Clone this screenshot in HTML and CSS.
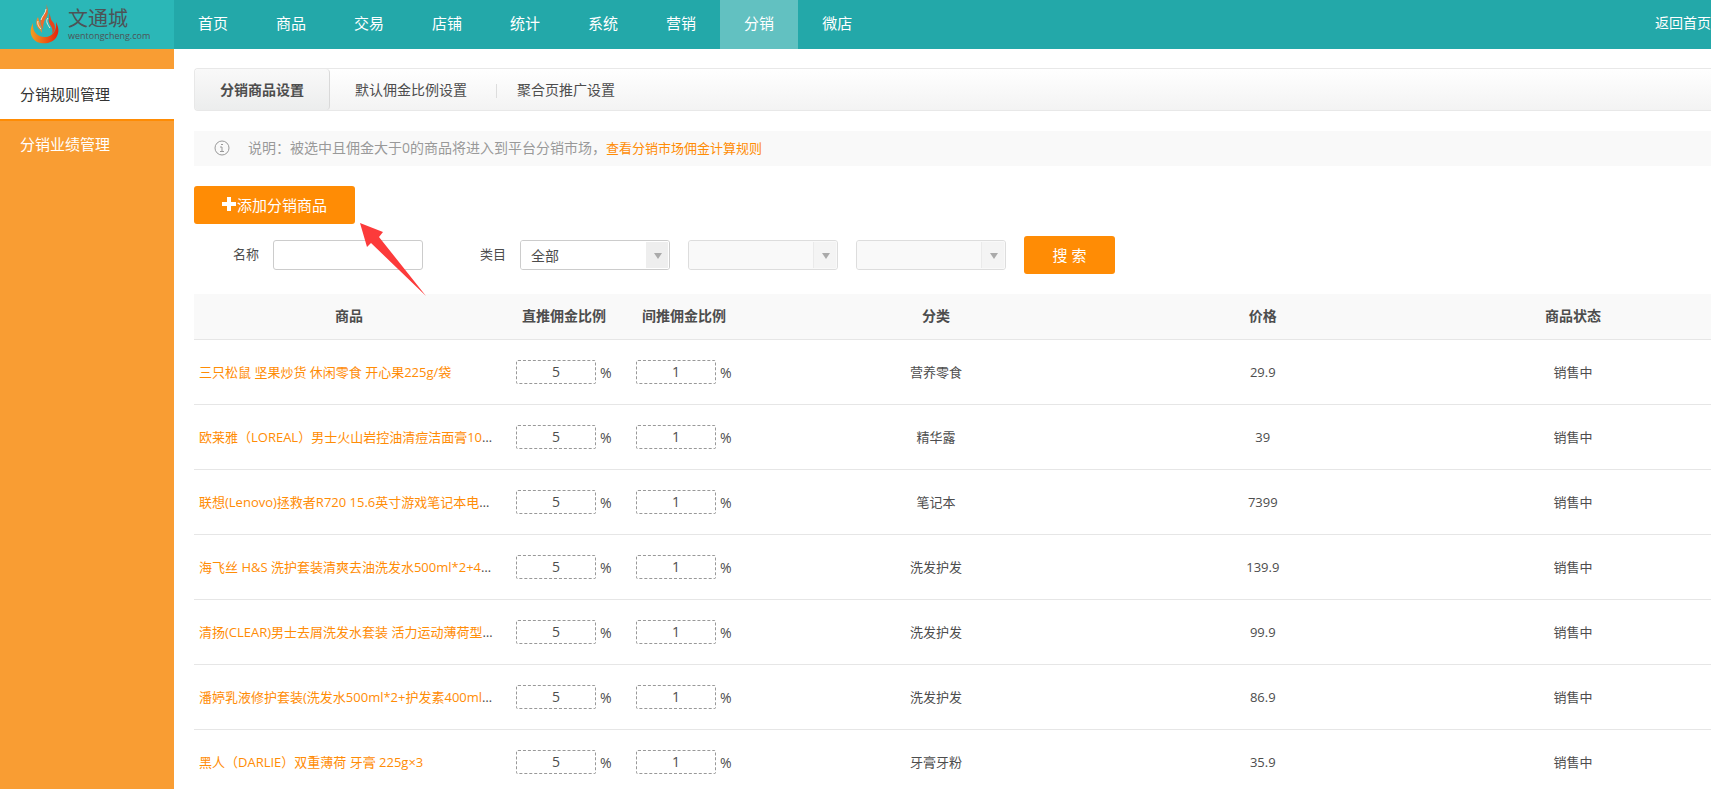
FILE: index.html
```html
<!DOCTYPE html>
<html lang="zh-CN">
<head>
  <meta charset="UTF-8">
  <meta name="viewport" content="width=device-width, initial-scale=1.0">
  <title>分销规则管理</title>
  <link rel="stylesheet" href="styles.css">
</head>
<body>
  <header class="header">
    <a href="#" class="logo">
      <svg class="logo-flame" width="32" height="42" viewBox="0 0 32 42">
        <defs>
          <linearGradient id="flame" x1="0" y1="0" x2="1" y2="0">
            <stop offset="0" stop-color="#f0a020"/>
            <stop offset="1" stop-color="#e8200c"/>
          </linearGradient>
        </defs>
        <path d="M4 19C0 26 1 34 8 38C15 41 25 39 28 32C30 28 30 24 27 18C28 26 24 33 16 33C8 33 3 27 4 19Z" fill="url(#flame)"/>
        <path d="M17 0C19 6 16 9 13 13C11 16 11 19 12 21L14 26C14 20 15 17 17 14C19 11 20 6 17 0Z" fill="#ec6a2c"/>
        <path d="M19 8C22 12 19 15 20 18C21 22 25 24 23 30C28 25 26 20 23 17C21 14 22 11 19 8Z" fill="#e8451c"/>
        <path d="M9 13C6 18 7 22 11 26L13 29C13 24 11 20 9 13Z" fill="#ee8a30"/>
        <path d="M17 5C17 9 13 12 12 16M19 14C16 17 19 21 21 24M9 17C8 20 10 23 12 25" fill="none" stroke="#f8e6d4"/>
      </svg>
      <span class="logo-text">
        <b>文通城</b>
        <small>wentongcheng.com</small>
      </span>
    </a>
    <nav class="nav">
      <a href="#">首页</a>
      <a href="#">商品</a>
      <a href="#">交易</a>
      <a href="#">店铺</a>
      <a href="#">统计</a>
      <a href="#">系统</a>
      <a href="#">营销</a>
      <a href="#" class="active">分销</a>
      <a href="#">微店</a>
    </nav>
    <a href="#" class="back">返回首页</a>
  </header>

  <div class="wrap">
    <aside class="sidebar">
      <a href="#" class="active">分销规则管理</a>
      <a href="#">分销业绩管理</a>
    </aside>

    <main class="main">
      <div class="tabs">
        <a href="#" class="active">分销商品设置</a>
        <a href="#">默认佣金比例设置</a>
        <a href="#">聚合页推广设置</a>
      </div>

      <div class="tips">
        <svg width="16" height="16" viewBox="0 0 16 16" fill="none" stroke="#999">
          <circle cx="8" cy="8" r="7"/>
          <path d="M6 7H8V11M6 11.500H10M7 4.500H9"/>
        </svg>
        <p>说明：被选中且佣金大于0的商品将进入到平台分销市场，<a href="#">查看分销市场佣金计算规则</a></p>
      </div>

      <div class="toolbar">
        <button type="button" class="btn btn-add">
          <svg width="14" height="14" viewBox="0 0 14 14"><path d="M5 0H9V5H14V9H9V14H5V9H0V5H5Z" fill="#fff"/></svg>添加分销商品
        </button>
        <svg class="pointer" width="66" height="74" viewBox="0 0 66 74"><path d="M0 0L23 9L19 14L66 73L11 20L7 24Z" fill="#fc3b3b"/></svg>
      </div>

      <form class="search" id="form">
        <label for="name">名称</label>
        <input type="text" id="name" class="name">
        <label for="cate1" class="cate-label">类目</label>
        <span class="select">
          <select id="cate1"><option>全部</option></select>
        </span>
        <span class="select disabled">
          <select id="cate2" aria-label="二级类目" disabled><option></option></select>
        </span>
        <span class="select disabled">
          <select id="cate3" aria-label="三级类目" disabled><option></option></select>
        </span>
        <button type="submit" class="btn btn-search">搜 索</button>
      </form>

      <table class="list">
        <thead>
          <tr>
            <th class="c-goods">商品</th>
            <th class="c-rate">直推佣金比例</th>
            <th class="c-rate">间推佣金比例</th>
            <th class="c-cate">分类</th>
            <th class="c-price">价格</th>
            <th class="c-status">商品状态</th>
          </tr>
        </thead>
        <tbody>
          <tr>
            <td><div class="goods"><a href="#">三只松鼠 坚果炒货 休闲零食 开心果225g/袋</a></div></td>
            <td class="rate"><input type="text" value="5" aria-label="直推佣金比例">%</td>
            <td class="rate"><input type="text" value="1" aria-label="间推佣金比例">%</td>
            <td>营养零食</td>
            <td>29.9</td>
            <td class="status">销售中</td>
          </tr>
          <tr>
            <td><div class="goods"><a href="#">欧莱雅（LOREAL）男士火山岩控油清痘洁面膏100ml</a></div></td>
            <td class="rate"><input type="text" value="5" aria-label="直推佣金比例">%</td>
            <td class="rate"><input type="text" value="1" aria-label="间推佣金比例">%</td>
            <td>精华露</td>
            <td>39</td>
            <td class="status">销售中</td>
          </tr>
          <tr>
            <td><div class="goods"><a href="#">联想(Lenovo)拯救者R720 15.6英寸游戏笔记本电脑 黑色</a></div></td>
            <td class="rate"><input type="text" value="5" aria-label="直推佣金比例">%</td>
            <td class="rate"><input type="text" value="1" aria-label="间推佣金比例">%</td>
            <td>笔记本</td>
            <td>7399</td>
            <td class="status">销售中</td>
          </tr>
          <tr>
            <td><div class="goods"><a href="#">海飞丝 H&amp;S 洗护套装清爽去油洗发水500ml*2+400ml</a></div></td>
            <td class="rate"><input type="text" value="5" aria-label="直推佣金比例">%</td>
            <td class="rate"><input type="text" value="1" aria-label="间推佣金比例">%</td>
            <td>洗发护发</td>
            <td>139.9</td>
            <td class="status">销售中</td>
          </tr>
          <tr>
            <td><div class="goods"><a href="#">清扬(CLEAR)男士去屑洗发水套装 活力运动薄荷型500ml</a></div></td>
            <td class="rate"><input type="text" value="5" aria-label="直推佣金比例">%</td>
            <td class="rate"><input type="text" value="1" aria-label="间推佣金比例">%</td>
            <td>洗发护发</td>
            <td>99.9</td>
            <td class="status">销售中</td>
          </tr>
          <tr>
            <td><div class="goods"><a href="#">潘婷乳液修护套装(洗发水500ml*2+护发素400ml组合)</a></div></td>
            <td class="rate"><input type="text" value="5" aria-label="直推佣金比例">%</td>
            <td class="rate"><input type="text" value="1" aria-label="间推佣金比例">%</td>
            <td>洗发护发</td>
            <td>86.9</td>
            <td class="status">销售中</td>
          </tr>
          <tr>
            <td><div class="goods"><a href="#">黑人（DARLIE）双重薄荷 牙膏 225g×3</a></div></td>
            <td class="rate"><input type="text" value="5" aria-label="直推佣金比例">%</td>
            <td class="rate"><input type="text" value="1" aria-label="间推佣金比例">%</td>
            <td>牙膏牙粉</td>
            <td>35.9</td>
            <td class="status">销售中</td>
          </tr>
        </tbody>
      </table>
    </main>
  </div>
</body>
</html>
```
FILE: styles.css
```css
*{
  box-sizing: border-box;
}
body{
  margin: 0;
  display: flex;
  flex-direction: column;
  min-height: 100vh;
  font-family: "Open Sans", "Noto Sans CJK SC", sans-serif;
  font-size: 13px;
  line-height: 20px;
  color: #4d4d4d;
  background-color: #fff;
}
a{
  text-decoration: none;
  color: #ff8c05;
}
input, select, button{
  font-family: inherit;
  color: inherit;
  outline: none;
}

/* header */
.header{
  display: flex;
  height: 49px;
  background-color: #23a8a9;
}
.header a{
  color: #fff;
}
.header .logo{
  display: flex;
  width: 174px;
  padding: 4px 0 0 29px;
  background-color: #2bb7b7;
  color: #4d5356;
}
.logo-text{
  display: flex;
  flex-direction: column;
  margin-left: 7px;
  padding-top: 5px;
}
.logo-text b{
  font-size: 20px;
  line-height: 20px;
  font-weight: 400;
}
.logo-text small{
  font-size: 9px;
  line-height: 14px;
}
.nav{
  display: flex;
  flex: 1;
}
.nav a{
  padding: 0 24px;
  font-size: 15px;
  line-height: 46px;
}
.nav .active{
  background-color: #62c1c1;
}
.header .back{
  font-size: 14px;
  line-height: 46px;
}

/* sidebar */
.wrap{
  display: flex;
  flex: 1;
}
.sidebar{
  width: 174px;
  flex-shrink: 0;
  padding-top: 20px;
  background-color: #f99d33;
}
.sidebar a{
  display: block;
  height: 50px;
  padding-left: 20px;
  border-top: 2px solid #ff8c05;
  font-size: 15px;
  line-height: 46px;
  color: #fff;
}
.sidebar .active{
  border-top-color: #fff;
  background-color: #fff;
  color: #333;
}

/* content */
.main{
  flex: 1;
  min-width: 0;
  padding: 19px 0 0 20px;
}
.tabs{
  display: flex;
  align-items: center;
  height: 43px;
  border: 1px solid #e8e8e8;
  border-right: none;
  border-radius: 4px 0 0 4px;
  background: linear-gradient(#fff, #f3f3f3);
}
.tabs a{
  padding: 0 20px;
  font-size: 14px;
  line-height: 41px;
  color: #4d4d4d;
}
.tabs .active{
  padding: 0 25px;
  margin-right: 5px;
  border-right: 1px solid #d9d9d9;
  border-radius: 4px;
  background: linear-gradient(#f9f9f9, #eceded);
  font-weight: bold;
}
.tabs a:last-child::before{
  content: "";
  display: inline-block;
  width: 1px;
  height: 14px;
  margin: 0 20px 0 -11px;
  vertical-align: middle;
  background-color: #ddd;
}
.tips{
  display: flex;
  align-items: center;
  height: 35px;
  margin-top: 20px;
  padding: 0 0 1px 20px;
  background-color: #f9f9f9;
  font-size: 14px;
  color: #999;
}
.tips p{
  margin: 0 0 0 18px;
}
.tips a{
  font-size: 13px;
}
.btn{
  height: 38px;
  padding-bottom: 2px;
  border: none;
  border-radius: 3px;
  background-color: #ff8c05;
  font-size: 15px;
  color: #fff;
}
.toolbar{
  display: flex;
  position: relative;
  margin-top: 20px;
}
.btn-add{
  display: flex;
  align-items: center;
  gap: 1px;
  width: 161px;
  padding: 0 28px 2px;
}
.pointer{
  position: absolute;
  left: 166px;
  top: 37px;
}
.search{
  display: flex;
  align-items: center;
  margin: 12px 0 20px;
  padding-left: 39px;
}
.search label{
  padding-bottom: 2px;
}
.name{
  width: 150px;
  height: 30px;
  margin-left: 14px;
  border: 1px solid #ccc;
  border-radius: 3px;
}
.cate-label{
  margin: 0 14px 0 57px;
}
.select{
  position: relative;
  width: 150px;
  height: 30px;
  margin-right: 18px;
  border: 1px solid #ccc;
  border-radius: 3px;
  overflow: hidden;
}
.select select{
  appearance: none;
  width: 100%;
  height: 28px;
  padding: 0 10px;
  border: none;
  background-color: #fff;
  font-size: 14px;
}
/* arrow box on the right of the drop-down */
.select::before{
  content: "";
  position: absolute;
  right: 1px;
  top: 1px;
  bottom: 1px;
  width: 22px;
  background-color: #eee;
}
.select::after{
  content: "";
  position: absolute;
  right: 7px;
  top: 12px;
  border: 4px solid transparent;
  border-top: 6px solid #aaa;
  border-bottom: none;
}
.disabled{
  border-color: #ddd;
}
.disabled select{
  background-color: #f7f7f7;
}
.disabled::before{
  border-left: 1px solid #ccc;
}
.btn-search{
  width: 91px;
}

/* table */
.list{
  width: 100%;
  table-layout: fixed;
  border-collapse: collapse;
  text-align: center;
}
.list th{
  height: 45px;
  padding: 0;
  border-bottom: 1px solid #e6e6e6;
  background-color: #f9f9f9;
  font-size: 14px;
}
.list td{
  height: 65px;
  padding: 0;
  border-bottom: 1px solid #e6e6e6;
}
.c-goods{
  width: 310px;
}
.c-rate{
  width: 120px;
}
.c-cate{
  width: 25.3%;
}
.c-price{
  width: 17.8%;
}
.list .c-status, .list .status{
  padding-left: 37px;
}
.goods{
  width: 296px;
  margin-left: 5px;
  text-align: left;
  white-space: nowrap;
  overflow: hidden;
  text-overflow: ellipsis;
}
.list .rate{
  padding-left: 12px;
  text-align: left;
  font-size: 14px;
}
.rate input{
  width: 80px;
  height: 24px;
  margin-right: 4px;
  padding: 0;
  border: 1px dashed #999;
  border-radius: 2px;
  font-size: 14px;
  text-align: center;
}
```
